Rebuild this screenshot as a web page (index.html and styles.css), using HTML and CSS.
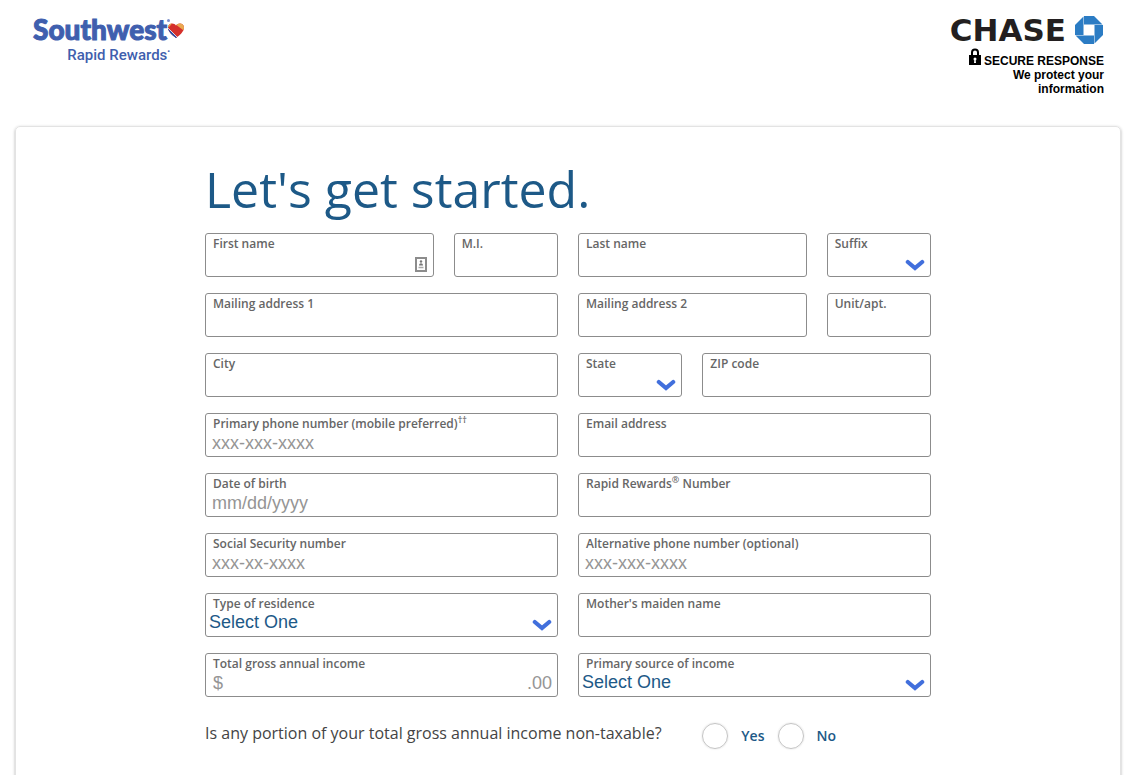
FILE: index.html
```html
<!DOCTYPE html>
<html lang="en">
<head>
  <meta charset="UTF-8">
  <meta name="viewport" content="width=device-width, initial-scale=1.0">
  <title>Southwest Rapid Rewards - Apply</title>
  <link rel="stylesheet" href="styles.css">
</head>
<body>
  <!-- shared icons -->
  <svg class="sprite" aria-hidden="true">
    <symbol id="chevron" viewBox="0 0 20 12">
      <path d="M2.800 3l7.200 6 7.200-6" fill="none" stroke="#416fdc" stroke-width="4.200" stroke-linecap="round" stroke-linejoin="miter"/>
    </symbol>
  </svg>

  <header class="header">
    <div class="brand">
      <div class="brand-name">
        <span>Southwest</span>
        <svg class="heart" viewBox="0 0 18 20" aria-hidden="true">
          <defs>
            <clipPath id="heart-shape">
              <path d="M9 19C5 16 1 12.500 1 8.500 1 5.700 3 4.500 5 4.500c2 0 3.300.8 4 2 .7-1.200 2-2 4-2s4 1.200 4 4c0 4-4 7.500-8 10.500z"/>
            </clipPath>
          </defs>
          <g clip-path="url(#heart-shape)">
            <rect width="18" height="20" fill="#d5302b"/>
            <path d="M0 8l12 12H0z" fill="#304ca2"/>
            <path d="M0 8l12 12" stroke="#dfd3df" stroke-width="1"/>
            <path d="M6 3.500l12 9V0H6z" fill="#eaa850"/>
            <path d="M0 2h5v2.500L2.500 7.500 0 9z" fill="#eaa850"/>
          </g>
          <circle cx="1.500" cy="1.500" r="1.500" fill="#7d90cc"/>
        </svg>
      </div>
      <div class="brand-program">Rapid Rewards<sup>&bull;</sup></div>
    </div>

    <div class="bank">
      <div class="bank-name">
        <span>CHASE</span>
        <svg class="octagon" viewBox="0 0 30 30" aria-hidden="true">
          <path d="M10 1h10l8.500 8.500H10z" fill="#2b7cc4"/>
          <path d="M29 10v10l-8.500 8.500V10z" fill="#2b7cc4"/>
          <path d="M20 29H10l-8.500-8.500H20z" fill="#2b7cc4"/>
          <path d="M1 20V10l8.500-8.500V20z" fill="#2b7cc4"/>
        </svg>
      </div>
      <p class="secure">
        <svg class="lock" viewBox="0 0 12 17" aria-hidden="true">
          <path d="M3 8V4.500a3 3 0 0 1 6 0V8" fill="none" stroke="#000" stroke-width="2"/>
          <rect y="7" width="12" height="10" fill="#000"/>
          <circle cx="6" cy="11" r="1.500" fill="#fff"/>
          <path d="M5.500 11h1l.5 4H5z" fill="#fff"/>
        </svg>
        SECURE RESPONSE<br>We protect your<br>information
      </p>
    </div>
  </header>

  <main class="card">
    <form class="form">
      <h1>Let's get started.</h1>
      <div class="fields">
        <div class="field medium">
          <label for="first-name">First name</label>
          <input type="text" id="first-name">
          <svg class="autofill" viewBox="0 0 12 15" aria-hidden="true">
            <rect x="1" y="1" width="10" height="13" fill="#fff" stroke="#8c8c8c" stroke-width="2"/>
            <circle cx="6" cy="4.500" r="1.200" fill="#777"/>
            <path d="M4 8.500c0-3 4-3 4 0z" fill="#777"/>
            <path d="M3.500 10.500h5" stroke="#aaa" stroke-width="1.500"/>
          </svg>
        </div>
        <div class="field small">
          <label for="middle">M.I.</label>
          <input type="text" id="middle">
        </div>
        <div class="field medium">
          <label for="last-name">Last name</label>
          <input type="text" id="last-name">
        </div>
        <div class="field small">
          <label for="suffix">Suffix</label>
          <select id="suffix"><option></option></select>
          <svg class="chevron" aria-hidden="true"><use href="#chevron"/></svg>
        </div>

        <div class="field large">
          <label for="address1">Mailing address 1</label>
          <input type="text" id="address1">
        </div>
        <div class="field medium">
          <label for="address2">Mailing address 2</label>
          <input type="text" id="address2">
        </div>
        <div class="field small">
          <label for="unit">Unit/apt.</label>
          <input type="text" id="unit">
        </div>

        <div class="field large">
          <label for="city">City</label>
          <input type="text" id="city">
        </div>
        <div class="field small">
          <label for="state">State</label>
          <select id="state"><option></option></select>
          <svg class="chevron" aria-hidden="true"><use href="#chevron"/></svg>
        </div>
        <div class="field medium">
          <label for="zip">ZIP code</label>
          <input type="text" id="zip">
        </div>

        <div class="field large">
          <label for="phone">Primary phone number (mobile preferred)<sup>††</sup></label>
          <input type="tel" id="phone" placeholder="xxx-xxx-xxxx">
        </div>
        <div class="field large">
          <label for="email">Email address</label>
          <input type="email" id="email">
        </div>

        <div class="field large">
          <label for="dob">Date of birth</label>
          <input type="text" id="dob" placeholder="mm/dd/yyyy">
        </div>
        <div class="field large">
          <label for="rr-number">Rapid Rewards<sup>®</sup> Number</label>
          <input type="text" id="rr-number">
        </div>

        <div class="field large">
          <label for="ssn">Social Security number</label>
          <input type="text" id="ssn" placeholder="xxx-xx-xxxx">
        </div>
        <div class="field large">
          <label for="alt-phone">Alternative phone number (optional)</label>
          <input type="tel" id="alt-phone" placeholder="xxx-xxx-xxxx">
        </div>

        <div class="field large">
          <label for="residence">Type of residence</label>
          <select id="residence"><option>Select One</option></select>
          <svg class="chevron" aria-hidden="true"><use href="#chevron"/></svg>
        </div>
        <div class="field large">
          <label for="maiden">Mother's maiden name</label>
          <input type="text" id="maiden">
        </div>

        <div class="field large">
          <label for="income">Total gross annual income</label>
          <div class="money">
            <span>$</span>
            <input type="text" id="income">
            <span>.00</span>
          </div>
        </div>
        <div class="field large">
          <label for="source">Primary source of income</label>
          <select id="source"><option>Select One</option></select>
          <svg class="chevron" aria-hidden="true"><use href="#chevron"/></svg>
        </div>
      </div>

      <div class="question" role="radiogroup" aria-labelledby="nontaxable">
        <p id="nontaxable">Is any portion of your total gross annual income non-taxable?</p>
        <div class="choices">
          <label><input type="radio" name="nontaxable">Yes</label>
          <label><input type="radio" name="nontaxable">No</label>
        </div>
      </div>
    </form>
  </main>
</body>
</html>
```

FILE: styles.css
```css
* {
  box-sizing: border-box;
}
body {
  margin: 0;
  background-color: #fff;
  font-family: "Open Sans", sans-serif;
}
.sprite {
  display: none;
}
.header {
  display: flex;
  justify-content: space-between;
  align-items: flex-start;
  height: 126px;
  padding: 12px 32px 0 33px;
}
.brand {
  color: #3f5fae;
  font-family: Lato, sans-serif;
}
.brand-name {
  display: flex;
  align-items: center;
  font-size: 28px;
  font-weight: 900;
  line-height: 34px;
  -webkit-text-stroke: 1px #3f5fae;
}
.heart {
  width: 18px;
  height: 20px;
}
.brand-program {
  padding-right: 15px;
  font-family: Roboto, sans-serif;
  font-size: 15px;
  font-weight: 500;
  line-height: 18px;
  text-align: right;
}
.brand-program sup {
  font-size: 8px;
  line-height: 0;
}
.bank-name {
  display: flex;
  align-items: center;
  justify-content: flex-end;
  gap: 8px;
  color: #231f20;
  font-family: "DejaVu Sans", sans-serif;
  font-size: 31px;
  font-weight: bold;
  line-height: 36px;
}
.octagon {
  width: 30px;
  height: 30px;
}
.secure {
  margin: 0;
  color: #000;
  font-family: "Liberation Sans", Arial, sans-serif;
  font-size: 12px;
  font-weight: bold;
  line-height: 14px;
  text-align: right;
}
.lock {
  width: 12px;
  height: 17px;
  vertical-align: baseline;
}
.card {
  margin: 0 15px;
  padding-bottom: 40px;
  border: 1px solid #e3e3e3;
  border-radius: 5px;
  box-shadow: 0 1px 3px rgba(0, 0, 0, 0.3);
}
.form {
  max-width: 726px;
  margin: 0 auto;
}
h1 {
  margin: 27px 0 9px;
  color: #1d5987;
  font-size: 50px;
  font-weight: 400;
  line-height: 70px;
}
.fields {
  display: grid;
  grid-template-columns: repeat(6, 1fr);
  gap: 16px 20px;
}
.field {
  position: relative;
  height: 44px;
  border: 1px solid #8c8c8c;
  border-radius: 3px;
}
.small {
  grid-column: span 1;
}
.medium {
  grid-column: span 2;
}
.large {
  grid-column: span 3;
}
.field label {
  display: block;
  padding: 2px 7px 0;
  color: #666;
  font-size: 12px;
  font-weight: 600;
  line-height: 16px;
  white-space: nowrap;
}
.field sup {
  font-size: 9px;
  line-height: 0;
}
.field input,
.field select {
  display: block;
  width: 100%;
  height: 22px;
  margin: 0;
  padding: 0 6px;
  border: none;
  outline: none;
  background: none;
  color: #1d5987;
  font-family: "Liberation Sans", Arial, sans-serif;
  font-size: 18px;
}
.field select {
  height: 20px;
  padding: 0 3px;
  appearance: none;
}
.field input::placeholder {
  color: #959595;
}
.chevron {
  position: absolute;
  right: 5px;
  bottom: 5px;
  width: 20px;
  height: 12px;
  pointer-events: none;
}
.autofill {
  position: absolute;
  right: 6px;
  bottom: 4px;
  width: 12px;
  height: 15px;
}
.money {
  display: flex;
  padding: 0 5px 0 7px;
  color: #959595;
  font-family: "Liberation Sans", Arial, sans-serif;
  font-size: 18px;
  line-height: 22px;
}
.question {
  display: grid;
  grid-template-columns: repeat(6, 1fr);
  gap: 20px;
  padding-top: 24px;
}
.question p {
  grid-column: span 4;
  margin: 0;
  color: #444;
  font-size: 16px;
  line-height: 24px;
  white-space: nowrap;
}
.choices {
  display: flex;
  grid-column: span 2;
  gap: 13px;
}
.choices label {
  display: flex;
  align-items: center;
  gap: 13px;
  height: 29px;
  color: #1d5987;
  font-size: 14px;
  font-weight: 600;
}
.choices input {
  width: 26px;
  height: 26px;
  margin: 0;
  border: 1px solid #c4c4c4;
  border-radius: 50%;
  appearance: none;
  box-shadow: 0 0 2px rgba(0, 0, 0, 0.15);
}
.choices input:checked {
  border: 8px solid #1d5987;
}
```
